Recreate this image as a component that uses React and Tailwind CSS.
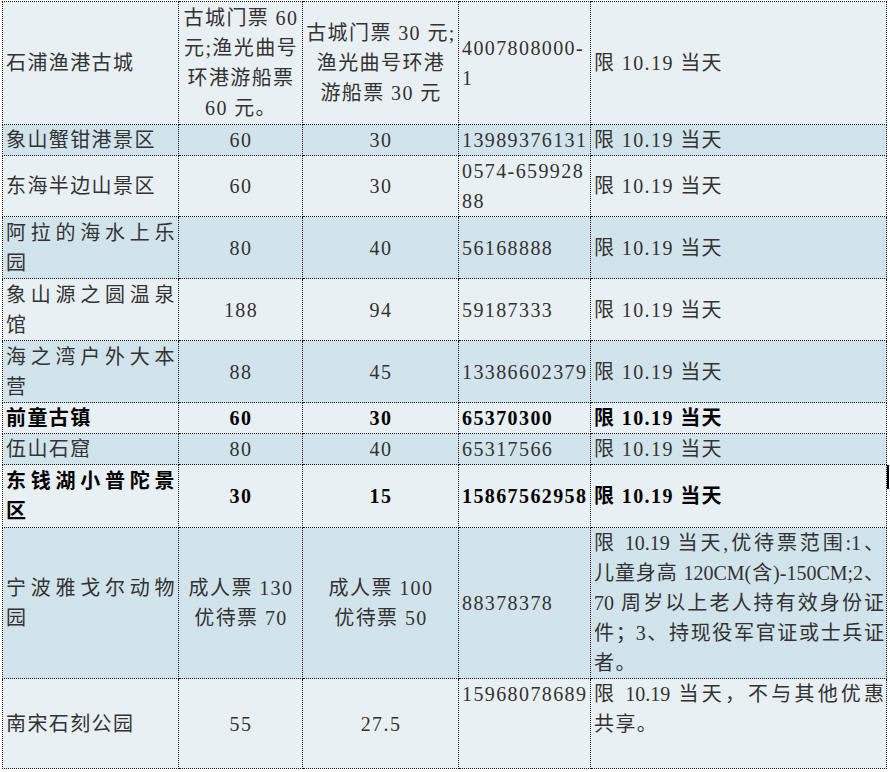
const LIGHT = 'bg-[#e9f0f4]';
const DARK = 'bg-[#d1e3eb]';

const widths = ['w-[176px]', 'w-[124px]', 'w-[156px]', 'w-[132px]', 'w-[296px]'];

// each row: height, shade, bold?, cells (lines per cell)
const rows = [
  {
    h: 'h-[123px]', bg: LIGHT,
    cells: [
      ['石浦渔港古城'],
      ['古城门票 60', '元;渔光曲号', '环港游船票', '60 元。'],
      ['古城门票 30 元;', '渔光曲号环港', '游船票 30 元'],
      ['4007808000-', '1'],
      ['限 10.19 当天'],
    ],
  },
  { h: 'h-[31px]', bg: DARK, cells: [['象山蟹钳港景区'], ['60'], ['30'], ['13989376131'], ['限 10.19 当天']] },
  { h: 'h-[61px]', bg: LIGHT, cells: [['东海半边山景区'], ['60'], ['30'], ['0574-659928', '88'], ['限 10.19 当天']] },
  { h: 'h-[62px]', bg: DARK, cells: [['阿拉的海水上乐', '园'], ['80'], ['40'], ['56168888'], ['限 10.19 当天']] },
  { h: 'h-[62px]', bg: LIGHT, cells: [['象山源之圆温泉', '馆'], ['188'], ['94'], ['59187333'], ['限 10.19 当天']] },
  { h: 'h-[62px]', bg: DARK, cells: [['海之湾户外大本', '营'], ['88'], ['45'], ['13386602379'], ['限 10.19 当天']] },
  { h: 'h-[31px]', bg: LIGHT, bold: true, cells: [['前童古镇'], ['60'], ['30'], ['65370300'], ['限 10.19 当天']] },
  { h: 'h-[31px]', bg: DARK, cells: [['伍山石窟'], ['80'], ['40'], ['65317566'], ['限 10.19 当天']] },
  { h: 'h-[63px]', bg: LIGHT, bold: true, cells: [['东钱湖小普陀景', '区'], ['30'], ['15'], ['15867562958'], ['限 10.19 当天']] },
  {
    h: 'h-[151px]', bg: DARK,
    cells: [
      ['宁波雅戈尔动物', '园'],
      ['成人票 130', '优待票 70'],
      ['成人票 100', '优待票 50'],
      ['88378378'],
      [
        '限 10.19 当天,优待票范围:1、',
        '儿童身高 120CM(含)-150CM;2、',
        '70 周岁以上老人持有效身份证',
        '件；3、持现役军官证或士兵证',
        '者。',
      ],
    ],
  },
  {
    h: 'h-[90px]', bg: LIGHT, top: true,
    cells: [['南宋石刻公园'], ['55'], ['27.5'], ['15968078689'], ['限 10.19 当天，不与其他优惠', '共享。']],
  },
];

function Cell({ lines, col, row }) {
  const center = col === 1 || col === 2;
  const justify = col === 0 || col === 4;
  const top = row.top && (col === 3 || col === 4);
  return (
    <td
      className={`${widths[col]} border border-dotted border-[#1a1a1a] pl-[3px] pr-[2px] ${
        top ? 'align-top' : 'align-middle'
      } ${center ? 'text-center' : 'text-left'}`}
    >
      {lines.map((line, i) => {
        const spread = justify && i < lines.length - 1;
        return (
          <div
            key={i}
            className={`whitespace-nowrap ${spread ? '[text-align-last:justify]' : ''} ${
              spread && col === 4 ? 'tracking-normal' : ''
            }`}
          >
            {line}
          </div>
        );
      })}
    </td>
  );
}

export default function App() {
  return (
    <div className="relative w-[890px] h-[772px] bg-white overflow-hidden">
      <table
        className="ml-[2px] mt-px table-fixed border-collapse text-[20px] leading-[30px] tracking-[1.4px] w-[884px]"
        style={{ fontFamily: '"Liberation Serif", "Noto Sans CJK SC", serif' }}
      >
        <tbody>
          {rows.map((row, r) => (
            <tr
              key={r}
              className={`${row.h} ${row.bg} ${row.bold ? 'font-bold text-black' : 'font-normal text-[#333]'}`}
            >
              {row.cells.map((lines, c) => (
                <Cell key={c} lines={lines} col={c} row={row} />
              ))}
            </tr>
          ))}
        </tbody>
      </table>
      <div className="absolute left-[887px] top-[465px] w-[2px] h-[24px] bg-black" />
    </div>
  );
}
